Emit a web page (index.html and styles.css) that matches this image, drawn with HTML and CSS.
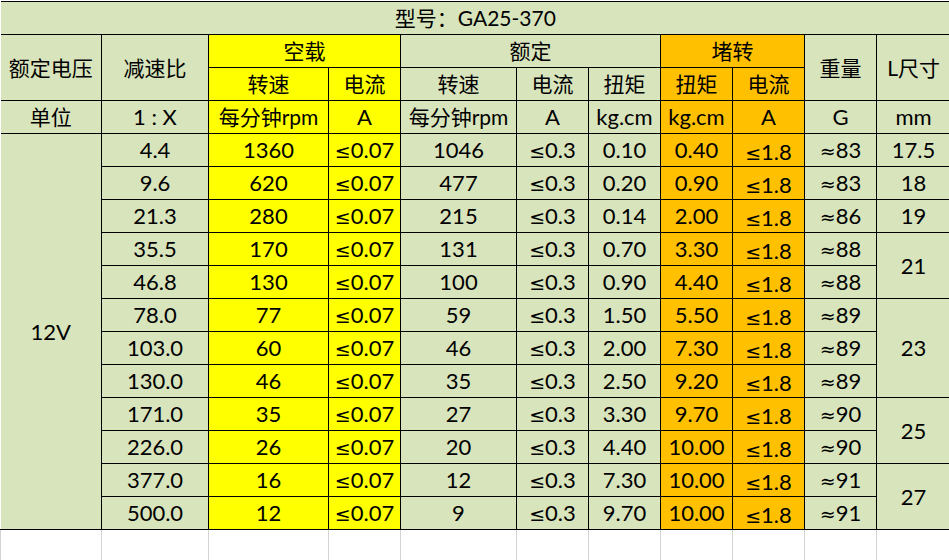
FILE: index.html
```html
<!DOCTYPE html>
<html lang="zh-CN">
<head>
    <meta charset="UTF-8">
    <meta name="viewport" content="width=device-width, initial-scale=1.0">
    <title>GA25-370 参数表</title>
    <link rel="stylesheet" href="styles.css">
</head>
<body>

    <table class="spec">
        <colgroup>
            <col class="c-volt">
            <col class="c-ratio">
            <col class="c-wide">
            <col class="c-narrow">
            <col class="c-wide2">
            <col class="c-narrow">
            <col class="c-narrow">
            <col class="c-narrow">
            <col class="c-narrow">
            <col class="c-narrow">
            <col class="c-last">
        </colgroup>
        <tr>
            <td colspan="11" class="zh">型号：GA25-370</td>
        </tr>
        <tr>
            <td rowspan="2" class="zh">额定电压</td>
            <td rowspan="2" class="zh">减速比</td>
            <td colspan="2" class="zh noload">空载</td>
            <td colspan="3" class="zh">额定</td>
            <td colspan="2" class="zh stall">堵转</td>
            <td rowspan="2" class="zh">重量</td>
            <td rowspan="2" class="zh">L尺寸</td>
        </tr>
        <tr>
            <td class="zh noload">转速</td>
            <td class="zh noload">电流</td>
            <td class="zh">转速</td>
            <td class="zh">电流</td>
            <td class="zh">扭矩</td>
            <td class="zh stall">扭矩</td>
            <td class="zh stall">电流</td>
        </tr>
        <tr>
            <td class="zh">单位</td>
            <td>1 : X</td>
            <td class="zh noload">每分钟rpm</td>
            <td class="noload">A</td>
            <td class="zh">每分钟rpm</td>
            <td>A</td>
            <td>kg.cm</td>
            <td class="stall">kg.cm</td>
            <td class="stall">A</td>
            <td>G</td>
            <td>mm</td>
        </tr>
        <tr>
            <td rowspan="12">12V</td>
            <td>4.4</td><td class="noload">1360</td><td class="noload"><span class="sym">≤</span>0.07</td>
            <td>1046</td><td><span class="sym">≤</span>0.3</td><td>0.10</td>
            <td class="stall">0.40</td><td class="stall low"><span class="sym">≤</span>1.8</td>
            <td><span class="sym">≈</span>83</td><td>17.5</td>
        </tr>
        <tr>
            <td>9.6</td><td class="noload">620</td><td class="noload"><span class="sym">≤</span>0.07</td>
            <td>477</td><td><span class="sym">≤</span>0.3</td><td>0.20</td>
            <td class="stall">0.90</td><td class="stall low"><span class="sym">≤</span>1.8</td>
            <td><span class="sym">≈</span>83</td><td>18</td>
        </tr>
        <tr>
            <td>21.3</td><td class="noload">280</td><td class="noload"><span class="sym">≤</span>0.07</td>
            <td>215</td><td><span class="sym">≤</span>0.3</td><td>0.14</td>
            <td class="stall">2.00</td><td class="stall low"><span class="sym">≤</span>1.8</td>
            <td><span class="sym">≈</span>86</td><td>19</td>
        </tr>
        <tr>
            <td>35.5</td><td class="noload">170</td><td class="noload"><span class="sym">≤</span>0.07</td>
            <td>131</td><td><span class="sym">≤</span>0.3</td><td>0.70</td>
            <td class="stall">3.30</td><td class="stall low"><span class="sym">≤</span>1.8</td>
            <td><span class="sym">≈</span>88</td><td rowspan="2">21</td>
        </tr>
        <tr>
            <td>46.8</td><td class="noload">130</td><td class="noload"><span class="sym">≤</span>0.07</td>
            <td>100</td><td><span class="sym">≤</span>0.3</td><td>0.90</td>
            <td class="stall">4.40</td><td class="stall low"><span class="sym">≤</span>1.8</td>
            <td><span class="sym">≈</span>88</td>
        </tr>
        <tr>
            <td>78.0</td><td class="noload">77</td><td class="noload"><span class="sym">≤</span>0.07</td>
            <td>59</td><td><span class="sym">≤</span>0.3</td><td>1.50</td>
            <td class="stall">5.50</td><td class="stall low"><span class="sym">≤</span>1.8</td>
            <td><span class="sym">≈</span>89</td><td rowspan="3">23</td>
        </tr>
        <tr>
            <td>103.0</td><td class="noload">60</td><td class="noload"><span class="sym">≤</span>0.07</td>
            <td>46</td><td><span class="sym">≤</span>0.3</td><td>2.00</td>
            <td class="stall">7.30</td><td class="stall low"><span class="sym">≤</span>1.8</td>
            <td><span class="sym">≈</span>89</td>
        </tr>
        <tr>
            <td>130.0</td><td class="noload">46</td><td class="noload"><span class="sym">≤</span>0.07</td>
            <td>35</td><td><span class="sym">≤</span>0.3</td><td>2.50</td>
            <td class="stall">9.20</td><td class="stall low"><span class="sym">≤</span>1.8</td>
            <td><span class="sym">≈</span>89</td>
        </tr>
        <tr>
            <td>171.0</td><td class="noload">35</td><td class="noload"><span class="sym">≤</span>0.07</td>
            <td>27</td><td><span class="sym">≤</span>0.3</td><td>3.30</td>
            <td class="stall">9.70</td><td class="stall low"><span class="sym">≤</span>1.8</td>
            <td><span class="sym">≈</span>90</td><td rowspan="2">25</td>
        </tr>
        <tr>
            <td>226.0</td><td class="noload">26</td><td class="noload"><span class="sym">≤</span>0.07</td>
            <td>20</td><td><span class="sym">≤</span>0.3</td><td>4.40</td>
            <td class="stall">10.00</td><td class="stall low"><span class="sym">≤</span>1.8</td>
            <td><span class="sym">≈</span>90</td>
        </tr>
        <tr>
            <td>377.0</td><td class="noload">16</td><td class="noload"><span class="sym">≤</span>0.07</td>
            <td>12</td><td><span class="sym">≤</span>0.3</td><td>7.30</td>
            <td class="stall">10.00</td><td class="stall low"><span class="sym">≤</span>1.8</td>
            <td><span class="sym">≈</span>91</td><td rowspan="2">27</td>
        </tr>
        <tr>
            <td>500.0</td><td class="noload">12</td><td class="noload"><span class="sym">≤</span>0.07</td>
            <td>9</td><td><span class="sym">≤</span>0.3</td><td>9.70</td>
            <td class="stall">10.00</td><td class="stall low"><span class="sym">≤</span>1.8</td>
            <td><span class="sym">≈</span>91</td>
        </tr>
        <tr class="blank">
            <td></td><td></td><td></td><td></td><td></td><td></td>
            <td></td><td></td><td></td><td></td><td></td>
        </tr>
    </table>

</body>
</html>
```

FILE: styles.css
```css
body {
    margin: 0;
    padding-top: 1px;
    background: #fff;
    overflow: hidden;
    font-family: "Lato", "Noto Sans CJK SC", sans-serif;
}
.spec {
    border-collapse: collapse;
    table-layout: fixed;
    width: 950px;
    font-size: 22px;
    color: #000;
}
.c-volt { width: 101px; }
.c-ratio { width: 107px; }
.c-wide { width: 120px; }
.c-wide2 { width: 116px; }
.c-narrow { width: 72px; }
.c-last { width: 74px; }
.spec tr {
    height: 33px;
}
.spec td {
    padding: 0;
    border: 1px solid #000;
    background-color: #d8e4bc;
    text-align: center;
    vertical-align: middle;
    line-height: 24px;
    white-space: nowrap;
    overflow: hidden;
}
.spec td.zh {
    font-size: 21px;
}
.spec tr td:first-child {
    border-left: none;
}
.spec td.noload {
    background-color: #ffff00;
}
.spec td.stall {
    background-color: #ffc000;
}
.spec td.low {
    padding-top: 4px;
}
.sym {
    font-family: "DejaVu Sans", sans-serif;
    font-size: 19px;
}
.spec tr.blank td {
    height: 40px;
    background-color: #fff;
    border: none;
    border-left: 1px solid #d4d4d4;
}
```
